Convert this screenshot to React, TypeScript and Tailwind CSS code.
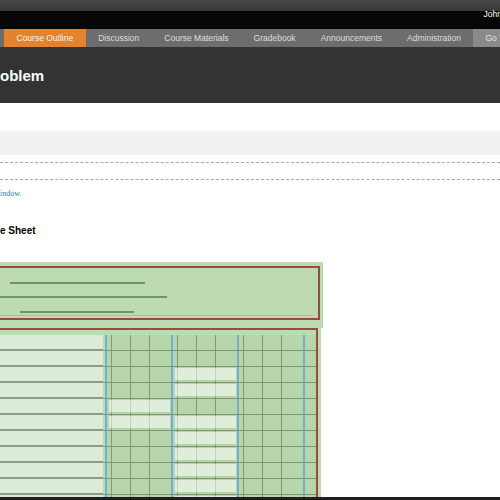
const TABS = ['Course Outline', 'Discussion', 'Course Materials', 'Gradebook', 'Announcements', 'Administration']

// which of the three column groups hold a pale entry box, row by row
const ROWS: number[][] = [[], [], [2], [2], [1], [1, 2], [2], [2], [2], [2], [2]]

function Group({ light }: { light: boolean }) {
  return (
    <div className="relative flex h-full w-[64.5px] shrink-0 bg-[#b7d6ac]">
      <div className="w-[4.5px] shrink-0" />
      <div className="w-px shrink-0 bg-[#7f9a79]" />
      <div className="w-[18px] shrink-0" />
      <div className="w-px shrink-0 bg-[#7f9a79]" />
      <div className="w-[18px] shrink-0" />
      <div className="w-px shrink-0 bg-[#7f9a79]" />
      <div className="flex-1" />
      {light && <div className="absolute left-[2.2px] right-[1.8px] top-[0.7px] h-[12px] bg-white/55" />}
    </div>
  )
}

function Row({ groups }: { groups: number[] }) {
  return (
    <div className="flex h-[16px] shrink-0">
      <div className="flex w-[103px] shrink-0 flex-col">
        <div className="h-[14px] bg-[#dcebd6]" />
        <div className="h-[2px] bg-[#8e9e8a]" />
      </div>
      <div className="flex flex-1 flex-col">
        <div className="flex h-[15px]">
          <div className="w-[2.3px] shrink-0" />
          <div className="w-[1.5px] shrink-0 bg-[#70b0d6]" />
          <Group light={groups.includes(1)} />
          <div className="w-[1.5px] shrink-0 bg-[#70b0d6]" />
          <Group light={groups.includes(2)} />
          <div className="w-[1.5px] shrink-0 bg-[#70b0d6]" />
          <Group light={groups.includes(3)} />
          <div className="w-[1.5px] shrink-0 bg-[#70b0d6]" />
          <div className="flex-1 bg-[#b7d6ac]" />
        </div>
        <div className="h-px bg-[#7d9478]" />
      </div>
    </div>
  )
}

export default function App() {
  return (
    <div className="flex h-[500px] w-[500px] flex-col overflow-hidden bg-white font-['Liberation_Sans',Arial,sans-serif]">
      <div className="flex min-h-0 flex-1 flex-col overflow-hidden">
        <div className="h-[11px] shrink-0 bg-gradient-to-b from-[#4a4a4a] to-[#383838]" />
        <div className="flex h-[18px] shrink-0 items-start justify-end bg-[#060606] pl-2">
          <span className="-mt-px mr-[-2px] text-[8.5px] leading-none text-white">John</span>
        </div>
        <nav className="flex h-[18px] shrink-0 items-stretch bg-[#6d6d6d] pl-[4px] text-[8.5px] leading-none">
          {TABS.map((t, i) => (
            <div
              key={t}
              className={
                i === 0
                  ? 'flex items-center whitespace-nowrap bg-[#e5822c] px-[12.5px] text-[#fff6ec]'
                  : 'flex items-center whitespace-nowrap px-[12.5px] text-[#dedede]'
              }
            >
              {t}
            </div>
          ))}
          <div className="flex flex-1 items-center whitespace-nowrap bg-[#8a8a8a] px-[12px] text-[#e4e4e4]">Go To</div>
        </nav>
        <header className="flex h-[56px] shrink-0 items-center bg-[#333333]">
          <h1 className="text-[15px] font-bold leading-none text-white">oblem</h1>
        </header>

        <div className="mt-[28px] h-[24px] shrink-0 bg-[#f1f1f1]" />
        <div className="mt-[7px] h-[18px] shrink-0 border-y border-dashed border-[#a8a8a8]" />

        <a className="mt-[10px] block shrink-0 font-['Liberation_Serif',serif] text-[8px] leading-none text-[#2f7db3]">indow.</a>
        <h2 className="mt-[28px] shrink-0 text-[10px] font-bold leading-none text-black">e Sheet</h2>

        <div className="mt-[26px] w-[323px] shrink-0 bg-[#bddbb3] pb-[8px] pr-[3.5px] pt-[4px]">
          <div className="flex h-[54px] flex-col border-y-2 border-r-2 border-[#9a4a3a]">
            <div className="ml-[10px] mt-[14px] h-[1.5px] w-[135px] bg-[#6f9466]" />
            <div className="mt-[12.5px] h-[1.5px] w-[167px] bg-[#6f9466]" />
            <div className="ml-[20px] mt-[13.5px] h-[1.5px] w-[114px] bg-[#6f9466]" />
            <div className="mt-[2px] h-px w-[314px] bg-[#a3c199]" />
          </div>
        </div>

        <div className="flex min-h-0 w-[321px] flex-1 flex-col bg-[#bddbb3] pr-[3.5px]">
          <div className="flex min-h-0 flex-1 flex-col overflow-hidden border-r-2 border-t-2 border-[#9a4a3a] pt-[5px]">
            {ROWS.map((g, i) => (
              <Row key={i} groups={g} />
            ))}
          </div>
        </div>
      </div>
      <div className="h-[3px] shrink-0 bg-[#1e1e1e]" />
    </div>
  )
}
